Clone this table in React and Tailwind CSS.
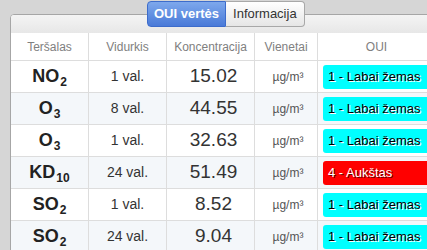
import React from 'react';

const rows = [
  { name: 'NO', sub: '2', avg: '1 val.', value: '15.02', level: 1 },
  { name: 'O', sub: '3', avg: '8 val.', value: '44.55', level: 1 },
  { name: 'O', sub: '3', avg: '1 val.', value: '32.63', level: 1 },
  { name: 'KD', sub: '10', avg: '24 val.', value: '51.49', level: 4 },
  { name: 'SO', sub: '2', avg: '1 val.', value: '8.52', level: 1 },
  { name: 'SO', sub: '2', avg: '24 val.', value: '9.04', level: 1 },
];

const levels = {
  1: { label: '1 - Labai žemas', classes: 'bg-[#00ffff] text-black [text-shadow:1px_1px_0_#fff]' },
  4: { label: '4 - Aukštas', classes: 'bg-[#ff0000] text-white [text-shadow:1px_1px_0_#600]' },
};

const cols = 'grid grid-cols-[78px_78px_88px_63px_1fr]';

const App = () => {
  return (
    <div className="w-[427px] h-[250px] overflow-hidden bg-[#d6d6d6] relative font-['Liberation_Sans',Arial,sans-serif]">
      {/* Tabs */}
      <div className="absolute left-[147px] top-[1px] z-10 flex h-[26px] text-[13px]">
        <div className="flex items-center px-[6px] rounded-l-[4px] border border-[#3d6ccb] bg-gradient-to-b from-[#7ea8ec] to-[#4a7ad8] text-white font-bold">
          OUI vertės
        </div>
        <div className="flex items-center px-[7px] rounded-r-[4px] border border-l-0 border-[#a8a8a8] bg-gradient-to-b from-white to-[#e6e6e6] text-[#333]">
          Informacija
        </div>
      </div>

      {/* Panel */}
      <div className="ml-[10px] mt-[14px] w-[460px] border border-[#a6a6a6] rounded-tl-[4px] bg-white overflow-hidden">
        <div className="h-[18px] bg-gradient-to-b from-[#f4f4f4] to-[#e7e7e7]" />

        {/* Header */}
        <div className={`${cols} h-[28px] border-b border-[#dddddd] text-[12px] text-[#808080]`}>
          {['Teršalas', 'Vidurkis', 'Koncentracija', 'Vienetai'].map((h) => (
            <div key={h} className="flex items-center justify-center border-r border-[#dddddd]">
              {h}
            </div>
          ))}
          <div className="flex items-center justify-center pr-[34px]">OUI</div>
        </div>

        {/* Rows */}
        {rows.map((r, i) => {
          const lvl = levels[r.level];
          return (
            <div
              key={i}
              className={`${cols} h-[32px] border-b border-[#dddddd] ${i % 2 ? 'bg-[#f4f7fa]' : 'bg-white'}`}
            >
              <div className="flex items-center justify-center border-r border-[#dddddd] text-[18px] font-bold text-[#222]">
                <span>
                  {r.name}
                  <sub className="text-[12px] relative top-[4px] ml-[1px]">{r.sub}</sub>
                </span>
              </div>
              <div className="flex items-center justify-center border-r border-[#dddddd] text-[14px] text-[#333]">
                {r.avg}
              </div>
              <div className="flex items-center justify-center pl-[6px] border-r border-[#dddddd] text-[19px] text-[#333]">
                {r.value}
              </div>
              <div className="flex items-center justify-center pl-[4px] border-r border-[#dddddd] text-[12px] text-[#555]">
                µg/m³
              </div>
              <div className="flex items-center pl-[5px]">
                <div className={`w-[130px] h-[24px] rounded-[3px] pl-[5px] flex items-center text-[13px] ${lvl.classes}`}>
                  {lvl.label}
                </div>
              </div>
            </div>
          );
        })}
      </div>
    </div>
  );
};

export default App;
